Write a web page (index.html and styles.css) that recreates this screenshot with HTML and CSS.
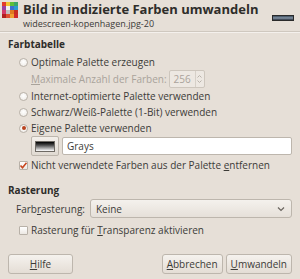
FILE: index.html
```html
<!DOCTYPE html>
<html>
<head>
<meta charset="utf-8">
<link rel="stylesheet" href="styles.css">
</head>
<body>
<div class="dialog">
  <div class="header">
    <svg class="app-icon" width="16" height="16" viewBox="0 0 16 16">
      <rect x="0" y="0" width="4" height="4" fill="#e23b2a"/>
      <rect x="4" y="0" width="4" height="4" fill="#f1c232"/>
      <rect x="8" y="0" width="4" height="4" fill="#5fbf3a"/>
      <rect x="12" y="0" width="4" height="4" fill="#3aa66a"/>
      <rect x="0" y="4" width="4" height="4" fill="#9a3fa0"/>
      <rect x="4" y="4" width="4" height="4" fill="#f0f0f0"/>
      <rect x="8" y="4" width="4" height="4" fill="#3f6fd0"/>
      <rect x="12" y="4" width="4" height="4" fill="#2b9bd0"/>
      <rect x="0" y="8" width="4" height="4" fill="#d43a6a"/>
      <rect x="4" y="8" width="4" height="4" fill="#c0c0c0"/>
      <rect x="8" y="8" width="4" height="4" fill="#e07a20"/>
      <rect x="12" y="8" width="4" height="4" fill="#c83020"/>
      <rect x="0" y="12" width="4" height="4" fill="#b02020"/>
      <rect x="4" y="12" width="4" height="4" fill="#e05030"/>
      <rect x="8" y="12" width="4" height="4" fill="#f0a030"/>
      <rect x="12" y="12" width="4" height="4" fill="#d02a2a"/>
    </svg>
    <div class="titles">
      <div class="title">Bild in indizierte Farben umwandeln</div>
      <div class="subtitle">widescreen-kopenhagen.jpg-20</div>
    </div>
    <div class="thumb"></div>
  </div>
  <div class="sep"></div>

  <div class="section">
    <div class="sec-title">Farbtabelle</div>
    <div class="opts">
      <div class="row"><span class="radio"></span><span>Optimale Palette erzeugen</span></div>
      <div class="row sub disabled spin-row">
        <span><u>M</u>aximale Anzahl der Farben:</span>
        <span class="spin"><span class="spin-val">256</span><span class="spin-btn"><svg width="5" height="10" viewBox="0 0 5 10"><path d="M0.5 3.5 L2.5 1.5 L4.5 3.5 M0.5 6.5 L2.5 8.5 L4.5 6.5" fill="none" stroke="#b8b2aa" stroke-width="1"/></svg></span></span>
      </div>
      <div class="row"><span class="radio"></span><span>Internet-optimierte Palette verwenden</span></div>
      <div class="row"><span class="radio"></span><span>Schwarz/Weiß-Palette (1-Bit) verwenden</span></div>
      <div class="row"><span class="radio on"></span><span>Eigene Palette verwenden</span></div>
      <div class="row sub palette">
        <span class="swatch-btn"><span class="swatch"></span></span>
        <span class="entry">Grays</span>
      </div>
      <div class="row after-palette"><span class="check on"><svg width="9" height="9" viewBox="0 0 9 9"><path d="M1.5 4.5 L3.5 6.8 L7.5 1.8" fill="none" stroke="#c8461e" stroke-width="1.6"/></svg></span><span>Nicht verwendete Farben aus der Palette <u>e</u>ntfernen</span></div>
    </div>
  </div>

  <div class="section second">
    <div class="sec-title">Rasterung</div>
    <div class="opts">
      <div class="row combo-row">
        <span>Farb<u>r</u>asterung:</span>
        <span class="combo"><span>Keine</span><svg width="8" height="6" viewBox="0 0 8 6"><path d="M1 1.5 L4 4.5 L7 1.5" fill="none" stroke="#6a655f" stroke-width="1.2"/></svg></span>
      </div>
      <div class="row"><span class="check"></span><span>Rasterung für <u>T</u>ransparenz aktivieren</span></div>
    </div>
  </div>

  <div class="buttons">
    <span class="btn help"><u>H</u>ilfe</span>
    <span class="spacer"></span>
    <span class="btn"><u>A</u>bbrechen</span>
    <span class="btn"><u>U</u>mwandeln</span>
  </div>
</div>
</body>
</html>
```
FILE: styles.css
```css
html, body {
  margin: 0;
  padding: 0;
  background: #e6dfd7;
}
body {
  font-family: "Open Sans", "DejaVu Sans", sans-serif;
  font-size: 10px;
  color: #3c3b37;
  width: 300px;
  height: 279px;
  overflow: hidden;
}
.dialog {
  display: flex;
  flex-direction: column;
  padding: 0 8px;
}
u { text-decoration: underline; text-underline-offset: 1px; }
.header {
  display: flex;
  align-items: flex-start;
  padding-top: 2px;
  margin-left: -6px;
  margin-right: -2px;
}
.app-icon { flex: none; margin-top: 0; }
.titles { margin-left: 5px; flex: 1; }
.title {
  font-weight: bold;
  font-size: 13px;
  line-height: 15px;
  color: #2e2d2a;
}
.subtitle {
  font-size: 9px;
  line-height: 10px;
  margin-top: 2px;
  color: #3c3b37;
}
.thumb {
  width: 20px;
  height: 4px;
  margin-top: 13px;
  background: linear-gradient(#3a4a5a, #8595a6 50%, #2c3440);
  border: 1px solid #2a2a2a;
}
.sep {
  height: 1px;
  background: #cfc8bf;
  border-bottom: 1px solid #f4f0ec;
  margin: 2px -8px 0 -8px;
}
.section { display: flex; flex-direction: column; margin-top: 4px; }
.section.second { margin-top: 10px; }
.sec-title {
  font-weight: bold;
  font-size: 10px;
  line-height: 14px;
  color: #2e2d2a;
}
.opts { display: flex; flex-direction: column; padding-left: 11px; margin-top: 3px; }
.second .opts { margin-top: 2px; }
.row {
  display: flex;
  align-items: center;
  min-height: 16px;
  gap: 3px;
}
.row.sub { padding-left: 12px; }
.spin-row { min-height: 18px; gap: 2px; }
.disabled { color: #a9a39b; }
.radio {
  width: 7px; height: 7px;
  border: 1px solid #b8b1a8;
  border-radius: 50%;
  background: radial-gradient(circle at 50% 40%, #ffffff, #ece8e3);
  flex: none;
  position: relative;
}
.radio.on::after {
  content: "";
  position: absolute;
  left: 1.5px; top: 1.5px;
  width: 4px; height: 4px;
  border-radius: 50%;
  background: #b9431f;
}
.check {
  width: 7px; height: 7px;
  border: 1px solid #b8b1a8;
  border-radius: 1px;
  background: linear-gradient(#ffffff, #ece8e3);
  flex: none;
  display: flex;
  align-items: center;
  justify-content: center;
}
.check svg { margin: -1px; flex: none; }
.spin {
  display: flex;
  align-items: center;
  height: 16px;
  border: 1px solid #cdc6bd;
  border-radius: 2px;
  background: #ede8e2;
}
.spin-val { width: 21px; padding-left: 4px; color: #aaa39b; }
.spin-btn {
  display: flex; align-items: center; justify-content: center;
  width: 8px; height: 16px;
  border-left: 1px solid #d6d0c8;
}
.palette { gap: 3px; min-height: 20px; }
.swatch-btn {
  display: flex; align-items: center; justify-content: center;
  width: 26px; height: 18px;
  border: 1px solid #bdb6ad;
  border-radius: 2px;
  background: linear-gradient(#f3efea, #e0dad2);
  flex: none;
}
.swatch {
  width: 20px; height: 11px;
  background: linear-gradient(#000000, #4a4a4a 35%, #ffffff);
  border: 1px solid #6e6a64;
  box-sizing: border-box;
}
.entry {
  flex: 1;
  height: 16px;
  border: 1px solid #bdb6ad;
  border-radius: 2px;
  background: #ffffff;
  display: flex; align-items: center;
  padding-left: 4px;
  color: #3c3b37;
}
.after-palette { margin-top: 1px; }
.combo-row { gap: 5px; margin-left: -3px; margin-bottom: 4px; }
.combo {
  flex: 1;
  height: 17px;
  border: 1px solid #bdb6ad;
  border-radius: 3px;
  background: linear-gradient(#f4f1ed, #e6e0d9);
  display: flex; align-items: center; justify-content: space-between;
  padding: 0 6px 0 5px;
}
.buttons {
  display: flex;
  align-items: center;
  gap: 3px;
  margin-top: 16px;
}
.spacer { flex: 1; }
.btn {
  height: 18px;
  border: 1px solid #bdb6ad;
  border-radius: 3px;
  background: linear-gradient(#f5f2ee, #e4ddd5);
  display: flex; align-items: center; justify-content: center;
  padding: 0 4px;
  color: #3c3b37;
}
.btn.help { width: 55px; }
```
